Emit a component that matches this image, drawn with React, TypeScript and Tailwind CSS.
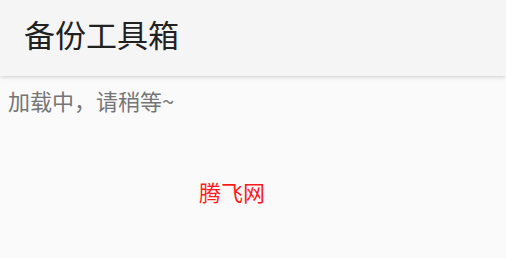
import React from 'react';

const App: React.FC = () => {
  return (
    <div
      className="h-[258px] w-[506px] overflow-hidden bg-[#fafafa]"
      style={{ fontFamily: '"Noto Sans CJK SC", "Noto Sans", sans-serif' }}
    >
      <header className="h-[76px] bg-[#f5f5f5] px-6 pt-[17px] shadow-[0_1px_4px_rgba(0,0,0,0.18)]">
        <h1 className="text-[31px] leading-[34px] text-[#212121]">备份工具箱</h1>
      </header>
      <p className="px-2 pt-[10px] text-[22px] leading-[28px] text-[#757575]">加载中，请稍等~</p>
      <div className="pl-[199px] pt-[63px] text-[22px] leading-[28px] text-[#ff1a1a]">腾飞网</div>
    </div>
  );
};

export default App;
